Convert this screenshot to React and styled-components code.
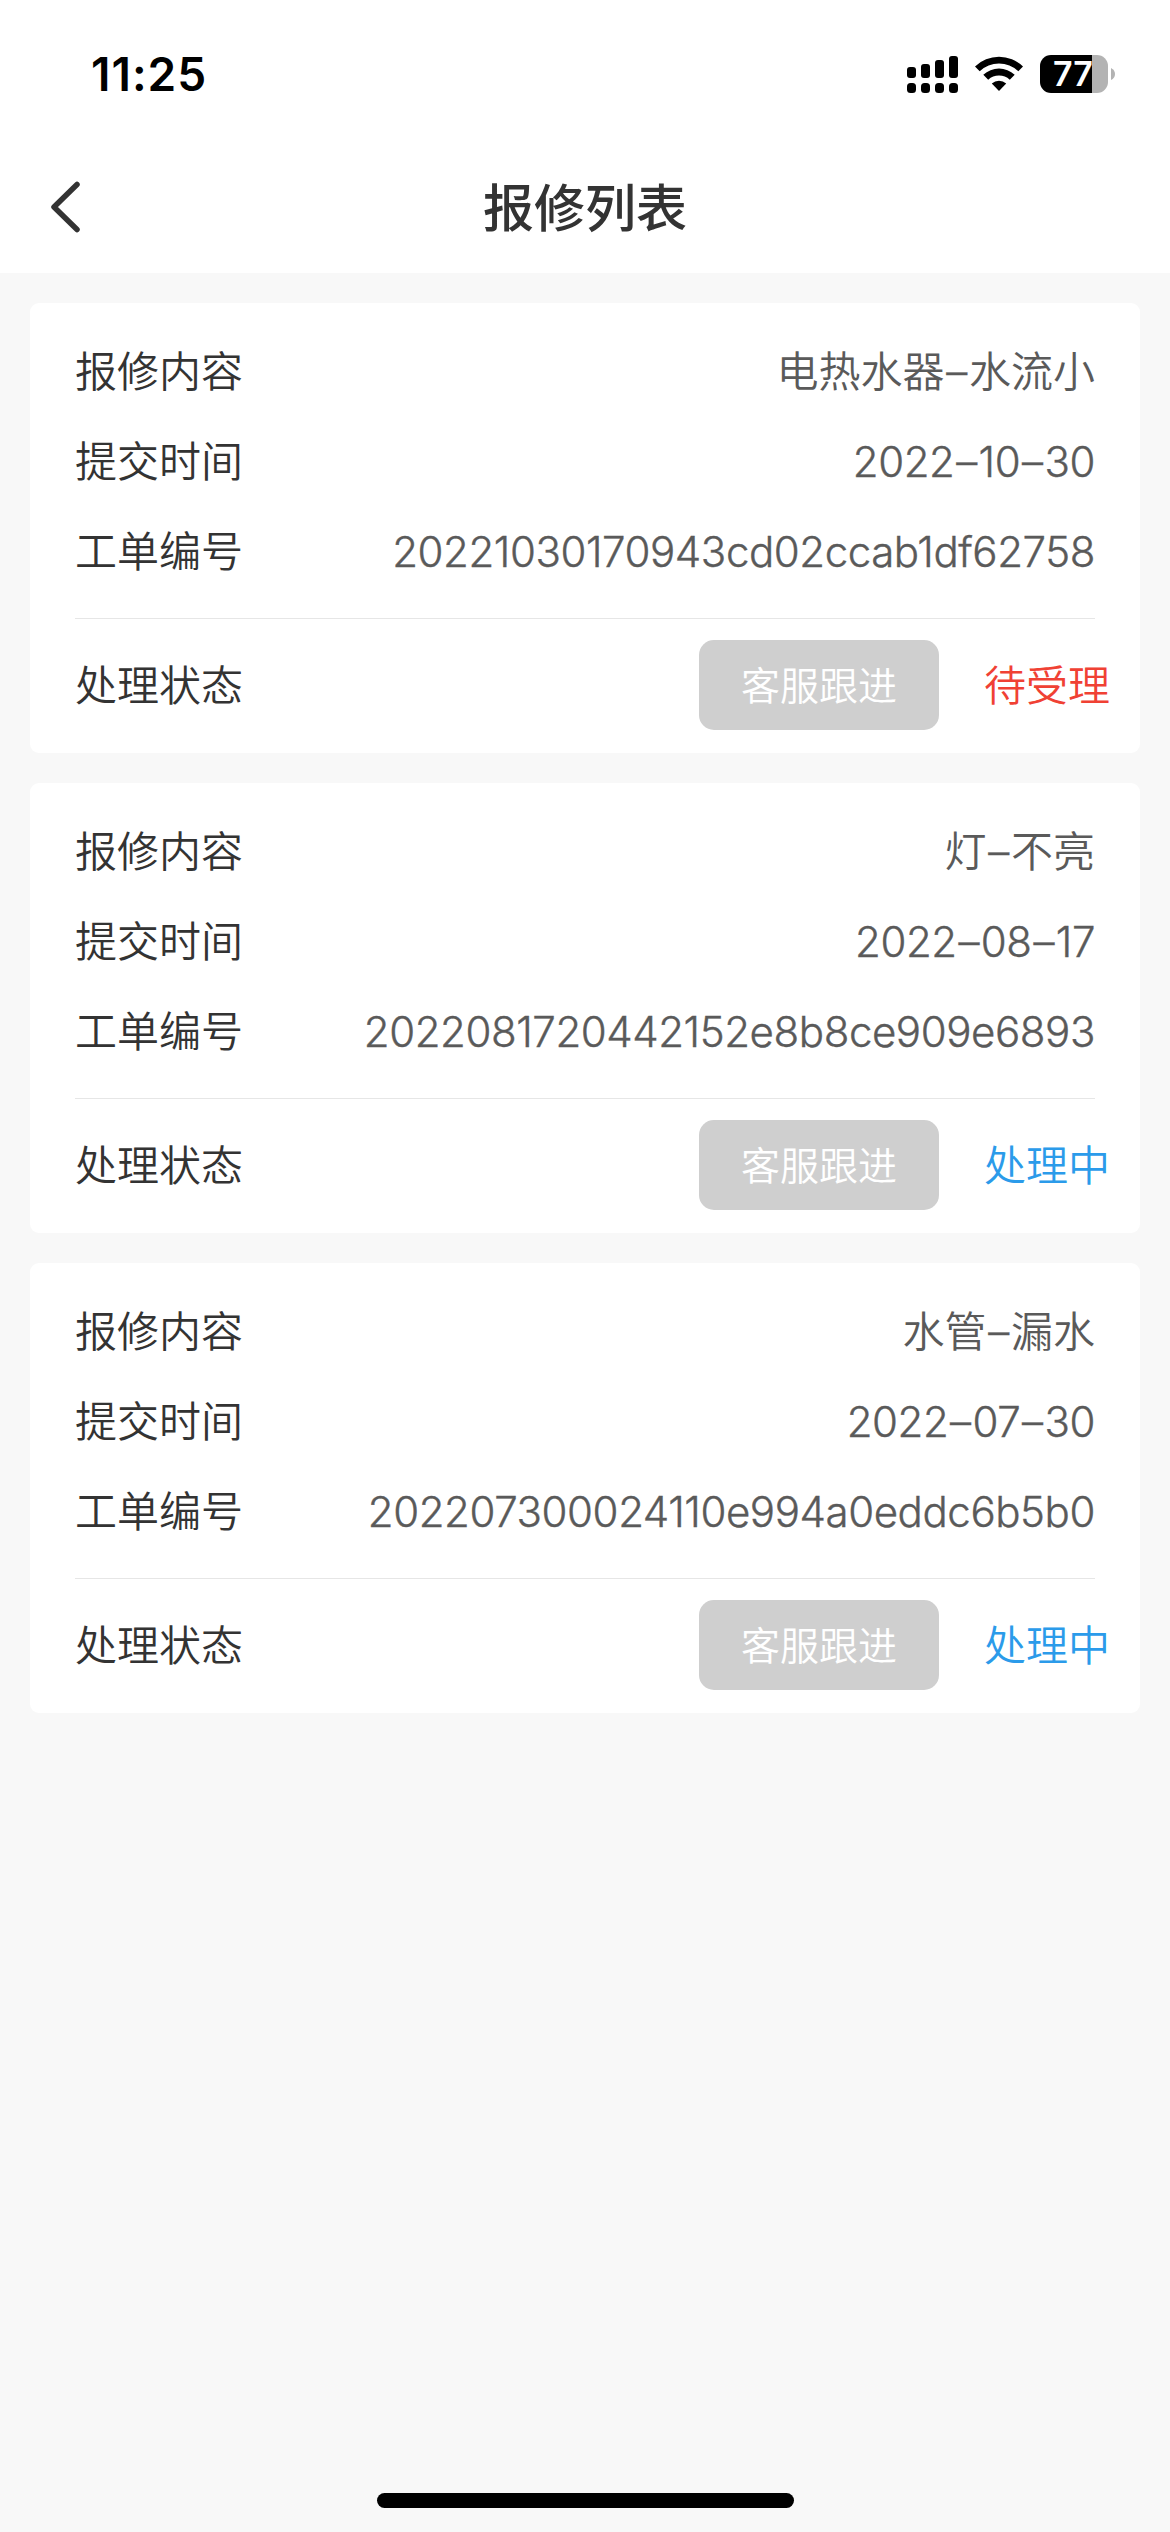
import * as React from "react"
import styled, { createGlobalStyle } from 'styled-components';

// Styles
const GlobalStyle = createGlobalStyle`
  * {
    box-sizing: border-box;
  }

  body {
    margin: 0;
    background: #f8f8f8;
    font-family: Inter, "Noto Sans CJK SC", sans-serif;
  }
`

const Screen = styled.div`
  display: flex;
  flex-direction: column;
  width: 1170px;
  height: 2532px;
  overflow: hidden;
  background: #f8f8f8;
`

const StatusBar = styled.div`
  display: flex;
  justify-content: space-between;
  align-items: center;
  height: 141px;
  padding: 0 55px 0 91px;
  background: #fff;
`

const Time = styled.div`
  margin-top: 7px;
  font-size: 46px;
  line-height: 54px;
  font-weight: 600;
  letter-spacing: 1px;
  color: #000;
`

const StatusIcons = styled.div`
  display: flex;
  align-items: center;
  margin-top: 7px;
`

const SignalIcon = styled.svg`
  width: 51px;
  height: 38px;
  margin-right: 17px;
`

const WifiIcon = styled.svg`
  width: 48px;
  height: 38px;
  margin-right: 17px;
`

const Battery = styled.div`
  display: flex;
  align-items: center;
  justify-content: center;
  width: 68px;
  height: 38px;
  padding-right: 2px;
  border-radius: 11px;
  background: linear-gradient(to right, #000 52px, #b3b3b3 52px);
  color: #fff;
  font-size: 34px;
  line-height: 38px;
  font-weight: 600;
`

const BatteryTip = styled.svg`
  width: 4px;
  height: 12px;
  margin-left: 3px;
`

const NavBar = styled.div`
  display: grid;
  grid-template-columns: 130px 1fr 130px;
  align-items: center;
  height: 132px;
  background: #fff;
`

const BackIcon = styled.svg`
  width: 30px;
  height: 52px;
  margin-left: 50px;
`

const Title = styled.div`
  padding-top: 3px;
  text-align: center;
  font-size: 51px;
  line-height: 72px;
  font-weight: 500;
  color: #333;
`

const List = styled.div`
  display: flex;
  flex-direction: column;
  flex: 1;
  gap: 30px;
  padding: 30px;
`

const Card = styled.div`
  height: 450px;
  padding: 23px 45px 0;
  border-radius: 9px;
  background: #fff;
`

const Row = styled.div`
  display: flex;
  justify-content: space-between;
  align-items: center;
  height: 90px;
  font-size: 42px;
  font-weight: 350;
`

const StatusRow = styled(Row)`
  margin-top: 21px;
  margin-right: -15px;
`

const Label = styled.div`
  padding-bottom: 6px;
  color: #333;
`

const Value = styled.div`
  padding-bottom: 6px;
  color: #5a5a5a;
`

const NumberValue = styled.div`
  color: #5a5a5a;
  letter-spacing: -0.42px;
  -webkit-text-stroke: 0.4px #5a5a5a;
`

const Dash = styled.span`
  padding: 0 1.8px;
  -webkit-text-stroke: 0.4px #5a5a5a;
`

const Divider = styled.div`
  height: 1px;
  margin-top: 22px;
  background: #e6e6e6;
`

const Actions = styled.div`
  display: flex;
  align-items: center;
  gap: 45px;
`

const FollowButton = styled.button`
  width: 240px;
  height: 90px;
  padding: 0 0 5px;
  border: 0;
  border-radius: 15px;
  background: #cfcfcf;
  color: #fff;
  font-family: inherit;
  font-size: 39px;
  font-weight: inherit;
`

const Status = styled.div`
  width: 126px;
  padding-bottom: 6px;
  white-space: nowrap;
  color: ${props => props.$pending ? "#f04134" : "#2b9bea"};
`

const HomeArea = styled.div`
  display: flex;
  justify-content: center;
  height: 39px;
`

const HomeIndicator = styled.div`
  width: 417px;
  height: 15px;
  border-radius: 8px;
  background: #000;
`

// Data
const orders = [
  {
    content: ["电热水器", "水流小"],
    date: ["2022", "10", "30"],
    number: "20221030170943cd02ccab1df62758",
    status: "待受理",
    pending: true
  },
  {
    content: ["灯", "不亮"],
    date: ["2022", "08", "17"],
    number: "2022081720442152e8b8ce909e6893",
    status: "处理中"
  },
  {
    content: ["水管", "漏水"],
    date: ["2022", "07", "30"],
    number: "202207300024110e994a0eddc6b5b0",
    status: "处理中"
  }
]

const bars = [
  { x: 0, y: 11 },
  { x: 14, y: 8 },
  { x: 28, y: 4 },
  { x: 42, y: 0 }
]

// Markup
const Signal = () => (
  <SignalIcon viewBox="0 0 51 38">
    {bars.map(({ x, y }) => (
      <g key={x}>
        <rect x={x} y={y + 1} width="9" height={22 - y} rx="3" />
        <rect x={x} y="28" width="9" height="10" rx="3.5" />
      </g>
    ))}
  </SignalIcon>
)

const Wifi = () => (
  <WifiIcon viewBox="0 0 48 38">
    <path d="M0 11.5A34.5 34.5 0 0 1 48 11.5L43.3 16.3A28 28 0 0 0 4.7 16.3Z" />
    <path d="M8.3 19.8A23 23 0 0 1 39.7 19.8L34.8 24.7A16 16 0 0 0 13.2 24.7Z" />
    <path d="M16.8 28.4A11 11 0 0 1 31.2 28.4L24 36Z" />
  </WifiIcon>
)

const Dashed = ({ parts }) => parts.map((part, index) => (
  <React.Fragment key={index}>
    {index > 0 && <Dash>–</Dash>}
    {part}
  </React.Fragment>
))

const Order = ({ order }) => (
  <Card>
    <Row>
      <Label>报修内容</Label>
      <Value><Dashed parts={order.content} /></Value>
    </Row>
    <Row>
      <Label>提交时间</Label>
      <NumberValue><Dashed parts={order.date} /></NumberValue>
    </Row>
    <Row>
      <Label>工单编号</Label>
      <NumberValue>{order.number}</NumberValue>
    </Row>
    <Divider />
    <StatusRow>
      <Label>处理状态</Label>
      <Actions>
        <FollowButton>客服跟进</FollowButton>
        <Status $pending={order.pending}>{order.status}</Status>
      </Actions>
    </StatusRow>
  </Card>
)

const App = () => {
  return(
    <Screen>
      <GlobalStyle />
      <StatusBar>
        <Time>11:25</Time>
        <StatusIcons>
          <Signal />
          <Wifi />
          <Battery>77</Battery>
          <BatteryTip viewBox="0 0 4 12">
            <path d="M0 0Q4 2 4 6T0 12Z" fill="#b3b3b3" />
          </BatteryTip>
        </StatusIcons>
      </StatusBar>
      <NavBar>
        <BackIcon viewBox="0 0 30 52">
          <path d="M27 3.5L4 26L27 48.5" fill="none" stroke="#333" strokeWidth="5.5" strokeLinecap="round" strokeLinejoin="round" />
        </BackIcon>
        <Title>报修列表</Title>
      </NavBar>
      <List>
        {orders.map((order, index) => (
          <Order key={index} order={order} />
        ))}
      </List>
      <HomeArea>
        <HomeIndicator />
      </HomeArea>
    </Screen>
  )
}

export default App
